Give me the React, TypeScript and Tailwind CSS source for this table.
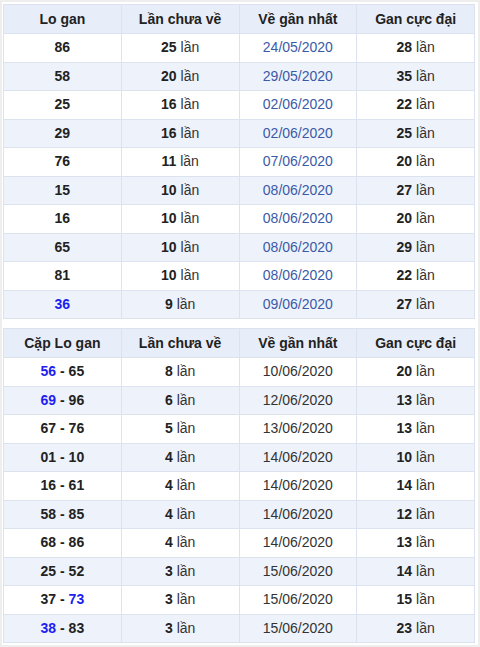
import React from 'react';

type Row1 = { lo: string; times: string; date: string; max: string; blue?: boolean };
type Pair = { a: string; b: string; times: string; date: string; max: string; blueA?: boolean; blueB?: boolean };

const loGan: Row1[] = [
  { lo: '86', times: '25', date: '24/05/2020', max: '28' },
  { lo: '58', times: '20', date: '29/05/2020', max: '35' },
  { lo: '25', times: '16', date: '02/06/2020', max: '22' },
  { lo: '29', times: '16', date: '02/06/2020', max: '25' },
  { lo: '76', times: '11', date: '07/06/2020', max: '20' },
  { lo: '15', times: '10', date: '08/06/2020', max: '27' },
  { lo: '16', times: '10', date: '08/06/2020', max: '20' },
  { lo: '65', times: '10', date: '08/06/2020', max: '29' },
  { lo: '81', times: '10', date: '08/06/2020', max: '22' },
  { lo: '36', times: '9', date: '09/06/2020', max: '27', blue: true },
];

const capLo: Pair[] = [
  { a: '56', b: '65', times: '8', date: '10/06/2020', max: '20', blueA: true },
  { a: '69', b: '96', times: '6', date: '12/06/2020', max: '13', blueA: true },
  { a: '67', b: '76', times: '5', date: '13/06/2020', max: '13' },
  { a: '01', b: '10', times: '4', date: '14/06/2020', max: '10' },
  { a: '16', b: '61', times: '4', date: '14/06/2020', max: '14' },
  { a: '58', b: '85', times: '4', date: '14/06/2020', max: '12' },
  { a: '68', b: '86', times: '4', date: '14/06/2020', max: '13' },
  { a: '25', b: '52', times: '3', date: '15/06/2020', max: '14' },
  { a: '37', b: '73', times: '3', date: '15/06/2020', max: '15', blueB: true },
  { a: '38', b: '83', times: '3', date: '15/06/2020', max: '23', blueA: true },
];

const th = 'h-[29px] border border-[#dde3ee] bg-[#e8eef9] text-center font-bold text-[14px] text-[#222]';
const td = 'h-[28.5px] border border-[#dde3ee] text-center text-[14px]';

const Lan: React.FC<{ n: string }> = ({ n }) => (
  <>
    <span className="font-bold text-[#222]">{n}</span> <span className="text-[#333]">lần</span>
  </>
);

const Head: React.FC<{ first: string }> = ({ first }) => (
  <thead>
    <tr>
      <th className={th}>{first}</th>
      <th className={th}>Lần chưa về</th>
      <th className={th}>Về gần nhất</th>
      <th className={th}>Gan cực đại</th>
    </tr>
  </thead>
);

export default function App() {
  return (
    <div
      className="w-[480px] h-[647px] bg-white border-2 border-[#eeeeee] pt-[2px] pl-[1px] pr-[2px] overflow-hidden"
      style={{ fontFamily: '"Liberation Sans", Arial, sans-serif' }}
    >
      <table className="w-[472px] border-collapse table-fixed">
        <Head first="Lo gan" />
        <tbody>
          {loGan.map((r, i) => (
            <tr key={r.lo} className={i % 2 ? 'bg-[#eef2fb]' : 'bg-white'}>
              <td className={`${td} font-bold ${r.blue ? 'text-[#1e1ef0]' : 'text-[#222]'}`}>{r.lo}</td>
              <td className={td}><Lan n={r.times} /></td>
              <td className={`${td} text-[#3a5aa8]`}>{r.date}</td>
              <td className={td}><Lan n={r.max} /></td>
            </tr>
          ))}
        </tbody>
      </table>

      <table className="w-[472px] border-collapse table-fixed mt-[9px]">
        <Head first="Cặp Lo gan" />
        <tbody>
          {capLo.map((r, i) => (
            <tr key={r.a} className={i % 2 ? 'bg-[#eef2fb]' : 'bg-white'}>
              <td className={`${td} font-bold text-[#222]`}>
                <span className={r.blueA ? 'text-[#1e1ef0]' : ''}>{r.a}</span>
                {' - '}
                <span className={r.blueB ? 'text-[#1e1ef0]' : ''}>{r.b}</span>
              </td>
              <td className={td}><Lan n={r.times} /></td>
              <td className={`${td} text-[#333]`}>{r.date}</td>
              <td className={td}><Lan n={r.max} /></td>
            </tr>
          ))}
        </tbody>
      </table>
    </div>
  );
}
